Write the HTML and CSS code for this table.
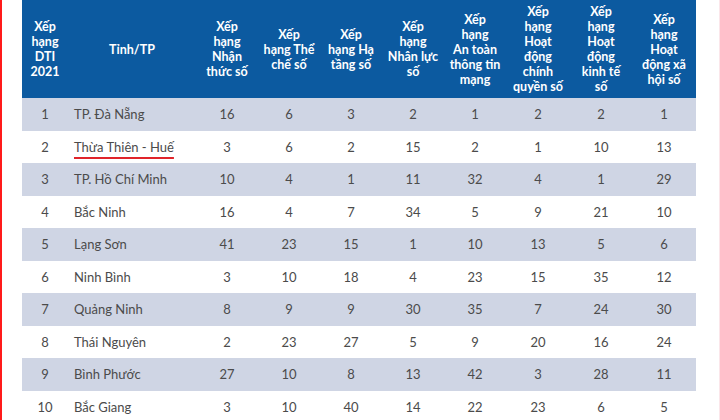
FILE: index.html
```html
<!DOCTYPE html>
<html lang="vi">
<head>
<meta charset="utf-8">
<link rel="stylesheet" href="styles.css">
</head>
<body>
<div class="page">
  <table class="rank">
    <colgroup>
      <col class="c-rank"><col class="c-name"><col class="c-n"><col class="c-n"><col class="c-n"><col class="c-n"><col class="c-n"><col class="c-w"><col class="c-n"><col class="c-w">
    </colgroup>
    <thead>
      <tr>
        <th>Xếp<br>hạng<br>DTI<br>2021</th>
        <th>Tỉnh/TP</th>
        <th>Xếp<br>hạng<br>Nhận<br>thức số</th>
        <th>Xếp<br>hạng Thể<br>chế số</th>
        <th>Xếp<br>hạng Hạ<br>tầng số</th>
        <th>Xếp<br>hạng<br>Nhân lực<br>số</th>
        <th>Xếp<br>hạng<br>An toàn<br>thông tin<br>mạng</th>
        <th>Xếp<br>hạng<br>Hoạt<br>động<br>chính<br>quyền số</th>
        <th>Xếp<br>hạng<br>Hoạt<br>động<br>kinh tế<br>số</th>
        <th>Xếp<br>hạng<br>Hoạt<br>động xã<br>hội số</th>
      </tr>
    </thead>
    <tbody>
      <tr class="alt"><td>1</td><td class="name">TP. Đà Nẵng</td><td>16</td><td>6</td><td>3</td><td>2</td><td>1</td><td>2</td><td>2</td><td>1</td></tr>
      <tr><td>2</td><td class="name"><span class="mark">Thừa Thiên - Huế</span></td><td>3</td><td>6</td><td>2</td><td>15</td><td>2</td><td>1</td><td>10</td><td>13</td></tr>
      <tr class="alt"><td>3</td><td class="name">TP. Hồ Chí Minh</td><td>10</td><td>4</td><td>1</td><td>11</td><td>32</td><td>4</td><td>1</td><td>29</td></tr>
      <tr><td>4</td><td class="name">Bắc Ninh</td><td>16</td><td>4</td><td>7</td><td>34</td><td>5</td><td>9</td><td>21</td><td>10</td></tr>
      <tr class="alt"><td>5</td><td class="name">Lạng Sơn</td><td>41</td><td>23</td><td>15</td><td>1</td><td>10</td><td>13</td><td>5</td><td>6</td></tr>
      <tr><td>6</td><td class="name">Ninh Bình</td><td>3</td><td>10</td><td>18</td><td>4</td><td>23</td><td>15</td><td>35</td><td>12</td></tr>
      <tr class="alt"><td>7</td><td class="name">Quảng Ninh</td><td>8</td><td>9</td><td>9</td><td>30</td><td>35</td><td>7</td><td>24</td><td>30</td></tr>
      <tr><td>8</td><td class="name">Thái Nguyên</td><td>2</td><td>23</td><td>27</td><td>5</td><td>9</td><td>20</td><td>16</td><td>24</td></tr>
      <tr class="alt"><td>9</td><td class="name">Bình Phước</td><td>27</td><td>10</td><td>8</td><td>13</td><td>42</td><td>3</td><td>28</td><td>11</td></tr>
      <tr><td>10</td><td class="name">Bắc Giang</td><td>3</td><td>10</td><td>40</td><td>14</td><td>22</td><td>23</td><td>6</td><td>5</td></tr>
    </tbody>
  </table>
</div>
</body>
</html>
```
FILE: styles.css
```css
html, body {
  margin: 0;
  padding: 0;
  background: #ffffff;
}
body {
  width: 720px;
  height: 420px;
  overflow: hidden;
  font-family: Lato, "Open Sans", "Liberation Sans", sans-serif;
}
.page {
  height: 420px;
  box-sizing: border-box;
  border-left: 2px solid #ff1a1a;
  border-right: 1px solid #fbe6ea;
  padding-left: 20px;
}
.rank {
  border-collapse: collapse;
  table-layout: fixed;
  width: 672px;
}
.c-rank { width: 46px; }
.c-name { width: 128px; }
.c-n { width: 62px; }
.c-w { width: 64px; }
.rank th {
  background: #0c5aa0;
  color: #ffffff;
  font-weight: 700;
  font-size: 12.5px;
  line-height: 15px;
  height: 98px;
  padding: 0 2px;
  text-align: center;
  vertical-align: middle;
}
.rank td {
  height: 32.5px;
  padding: 0;
  font-size: 13px;
  color: #4b4b4b;
  text-align: center;
  vertical-align: middle;
}
.rank td.name {
  text-align: left;
  padding-left: 6px;
}
.rank tr.alt td {
  background: #cfd5e4;
}
.mark {
  text-decoration: underline;
  text-decoration-color: #e0242a;
  text-decoration-thickness: 2px;
  text-underline-offset: 5px;
}
```
